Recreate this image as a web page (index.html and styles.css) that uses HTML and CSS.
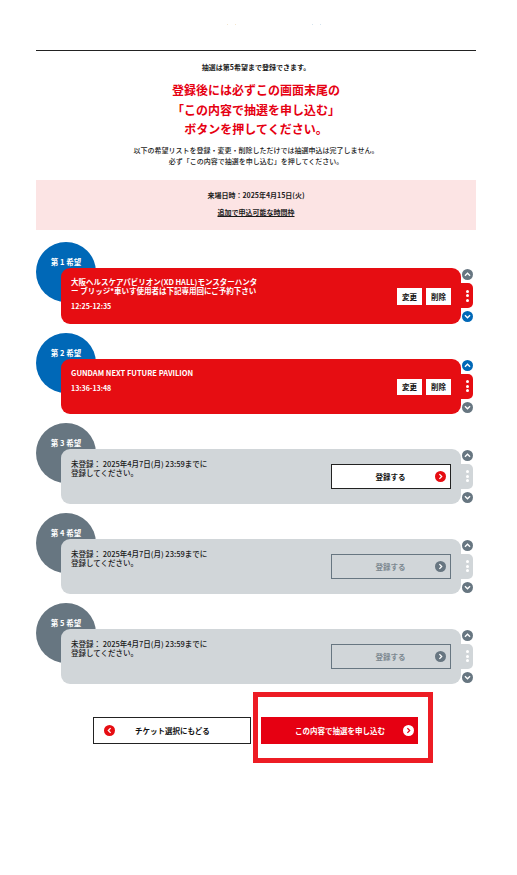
FILE: index.html
```html
<!DOCTYPE html>
<html lang="ja">
<head>
<meta charset="utf-8">
<title>抽選申込</title>
<link rel="stylesheet" href="styles.css">
</head>
<body>
<svg class="defs" width="0" height="0" aria-hidden="true">
  <symbol id="up" viewBox="0 0 12 12"><path d="M3.2 7.3 6 4.6l2.8 2.7" fill="none" stroke="#fff" stroke-width="1.5"/></symbol>
  <symbol id="down" viewBox="0 0 12 12"><path d="M3.2 4.7 6 7.4l2.8-2.7" fill="none" stroke="#fff" stroke-width="1.5"/></symbol>
  <symbol id="right" viewBox="0 0 12 12"><path d="M4.8 3.4 7.3 6 4.8 8.6" fill="none" stroke="currentColor" stroke-width="1.4"/></symbol>
  <symbol id="left" viewBox="0 0 12 12"><path d="M7.2 3.4 4.7 6l2.5 2.6" fill="none" stroke="currentColor" stroke-width="1.4"/></symbol>
</svg>
<main class="page">
  <header class="top"><i class="speck speck-warm"></i><i class="speck speck-warm"></i><i class="speck speck-cool speck-gap"></i><i class="speck speck-cool"></i></header>
  <p class="lead">抽選は第5希望まで登録できます。</p>
  <h1 class="alert">登録後には必ずこの画面末尾の<br>「この内容で抽選を申し込む」<br>ボタンを押してください。</h1>
  <p class="note">以下の希望リストを登録・変更・削除しただけでは抽選申込は完了しません。<br>必ず「この内容で抽選を申し込む」を押してください。</p>
  <section class="date">
    <p class="date-text">来場日時：2025年4月15日(火)</p>
    <a class="date-link" href="#">追加で申込可能な時間枠</a>
  </section>
  <ol class="list">
    <li class="item">
      <span class="badge badge-on">第 1 希望</span>
      <div class="card card-on">
        <div class="info">
          <p class="name">大阪ヘルスケアパビリオン(XD HALL)モンスターハンター ブリッジ*車いす使用者は下記専用回にご予約下さい</p>
          <p class="time">12:25-12:35</p>
        </div>
        <div class="actions"><button class="mini">変更</button><button class="mini">削除</button></div>
      </div>
      <div class="side">
        <span class="arrow arrow-off"><svg><use href="#up"/></svg></span>
        <span class="handle handle-on"><i></i><i></i><i></i></span>
        <span class="arrow arrow-on"><svg><use href="#down"/></svg></span>
      </div>
    </li>
    <li class="item">
      <span class="badge badge-on">第 2 希望</span>
      <div class="card card-on">
        <div class="info">
          <p class="name">GUNDAM NEXT FUTURE PAVILION</p>
          <p class="time">13:36-13:48</p>
        </div>
        <div class="actions"><button class="mini mini-short">変更</button><button class="mini mini-short">削除</button></div>
      </div>
      <div class="side">
        <span class="arrow arrow-on"><svg><use href="#up"/></svg></span>
        <span class="handle handle-on"><i></i><i></i><i></i></span>
        <span class="arrow arrow-off"><svg><use href="#down"/></svg></span>
      </div>
    </li>
    <li class="item">
      <span class="badge">第 3 希望</span>
      <div class="card">
        <p class="empty">未登録： 2025年4月7日(月) 23:59までに登録してください。</p>
        <button class="register"><span>登録する</span><span class="dot dot-red"><svg><use href="#right"/></svg></span></button>
      </div>
      <div class="side">
        <span class="arrow arrow-off"><svg><use href="#up"/></svg></span>
        <span class="handle"><i></i><i></i><i></i></span>
        <span class="arrow arrow-off"><svg><use href="#down"/></svg></span>
      </div>
    </li>
    <li class="item">
      <span class="badge">第 4 希望</span>
      <div class="card">
        <p class="empty">未登録： 2025年4月7日(月) 23:59までに登録してください。</p>
        <button class="register register-off"><span>登録する</span><span class="dot dot-grey"><svg><use href="#right"/></svg></span></button>
      </div>
      <div class="side">
        <span class="arrow arrow-off"><svg><use href="#up"/></svg></span>
        <span class="handle"><i></i><i></i><i></i></span>
        <span class="arrow arrow-off"><svg><use href="#down"/></svg></span>
      </div>
    </li>
    <li class="item">
      <span class="badge">第 5 希望</span>
      <div class="card">
        <p class="empty">未登録： 2025年4月7日(月) 23:59までに登録してください。</p>
        <button class="register register-off"><span>登録する</span><span class="dot dot-grey"><svg><use href="#right"/></svg></span></button>
      </div>
      <div class="side">
        <span class="arrow arrow-off"><svg><use href="#up"/></svg></span>
        <span class="handle"><i></i><i></i><i></i></span>
        <span class="arrow arrow-off"><svg><use href="#down"/></svg></span>
      </div>
    </li>
  </ol>
  <div class="footer">
    <button class="back"><span class="dot dot-red"><svg><use href="#left"/></svg></span><span class="back-label">チケット選択にもどる</span></button>
    <div class="frame">
      <button class="submit"><span class="submit-label">この内容で抽選を申し込む</span><span class="dot dot-white"><svg><use href="#right"/></svg></span></button>
    </div>
  </div>
</main>
</body>
</html>
```
FILE: styles.css
```css
* { box-sizing: border-box; }
html, body { margin: 0; padding: 0; background: #fff; }
body {
  font-family: "Noto Sans CJK JP", "Noto Sans", sans-serif;
  color: #1a1a1a;
  font-size: 7px;
  font-weight: 700;
}
p, h1, ol { margin: 0; padding: 0; }
.defs { position: absolute; }
.page { width: 440px; margin-left: 36px; height: 875px; }
.top {
  height: 51px;
  border-bottom: 1px solid #222;
  display: flex;
  gap: 7px;
  align-items: flex-start;
  padding: 24px 0 0 191px;
}
.speck { display: block; width: 1px; height: 1px; }
.speck-warm { background: #f3e6cf; }
.speck-cool { background: #d5e4ef; }
.speck-gap { margin-left: 69px; }

.lead { margin-top: 10px; line-height: 12px; text-align: center; font-size: 7px; }
.alert {
  margin-top: 7px;
  color: #e60012;
  font-size: 12px;
  font-weight: 700;
  line-height: 19.5px;
  text-align: center;
}
.note { margin-top: 6px; font-size: 7px; font-weight: 500; line-height: 11px; text-align: center; }

.date {
  margin-top: 13px;
  height: 50px;
  padding-top: 9px;
  background: #fce4e4;
  text-align: center;
}
.date-text { line-height: 12px; }
.date-link { display: inline-block; margin-top: 5px; line-height: 12px; color: #1a1a1a; text-decoration: underline; }

.list { list-style: none; margin-top: 12px; display: flex; flex-direction: column; gap: 9px; }
.item { position: relative; padding: 26px 15px 0 25px; }
.badge {
  position: absolute;
  left: 0;
  top: 0;
  width: 60px;
  height: 60px;
  border-radius: 50%;
  background: #677681;
  color: #fff;
  font-size: 7.5px;
  line-height: 12px;
  padding-top: 14px;
  text-align: center;
}
.badge-on { background: #0068b7; }

.card {
  position: relative;
  display: flex;
  justify-content: space-between;
  align-items: flex-start;
  width: 400px;
  height: 55px;
  padding: 10px 10px 15px;
  border-radius: 9px;
  background: #d1d6d9;
}
.card-on { background: #e60d12; color: #fff; padding-top: 9px; padding-bottom: 10px; }
.item:first-child .card { height: 56px; }
.info { width: 190px; flex: none; }
.name { font-size: 7.5px; line-height: 9px; }
.time { margin-top: 6px; line-height: 10px; }
.actions { display: flex; gap: 4px; align-self: flex-end; margin-bottom: 9px; }
.mini {
  width: 25px;
  height: 17px;
  border: 0;
  padding: 0;
  background: #fff;
  color: #111;
  font: inherit;
  font-size: 7.5px;
}
.mini-short { height: 16px; }
.empty { width: 140px; flex: none; font-weight: 500; font-size: 7.5px; line-height: 9px; }

.register {
  position: relative;
  align-self: flex-end;
  width: 120px;
  height: 25px;
  padding: 0 4px 0 0;
  border: 1px solid #222;
  background: #fff;
  color: #111;
  font: inherit;
  font-size: 7.5px;
  display: flex;
  align-items: center;
  justify-content: flex-end;
  gap: 29.5px;
}
.register-off { border-color: #677681; background: transparent; color: #7c8890; }

.dot { display: inline-flex; width: 11px; height: 11px; border-radius: 50%; flex: none; }
.dot svg { width: 11px; height: 11px; }
.dot-red { background: #e60d12; color: #fff; }
.dot-grey { background: #677681; color: #fff; }
.dot-white { background: #fff; color: #e60012; }

.side {
  position: absolute;
  left: 425px;
  top: 26px;
  bottom: 0;
  width: 12px;
  display: flex;
  flex-direction: column;
  align-items: center;
  justify-content: center;
  gap: 3px;
}
.arrow { display: block; width: 11px; height: 11px; border-radius: 50%; flex: none; }
.arrow svg { display: block; width: 11px; height: 11px; }
.arrow-on { background: #0068b7; }
.arrow-off { background: #677681; }
.handle {
  width: 12px;
  height: 25px;
  flex: none;
  border-radius: 0 5px 5px 0;
  background: #d1d6d9;
  display: flex;
  flex-direction: column;
  align-items: center;
  justify-content: center;
  gap: 1.5px;
}
.handle i { display: block; width: 3px; height: 3px; border-radius: 50%; background: #fff; }
.handle-on { background: #e60d12; }

.footer { display: flex; align-items: flex-start; margin-top: 8px; padding-left: 57px; }
.back {
  margin-top: 25px;
  width: 158px;
  height: 27px;
  padding: 0 0 0 10px;
  border: 1px solid #222;
  background: #fff;
  color: #111;
  font: inherit;
  font-size: 7.5px;
  display: flex;
  align-items: center;
}
.back-label { margin-left: 20px; }
.frame {
  width: 180px;
  height: 71px;
  margin-left: 2px;
  padding: 20px 0 0 3px;
  border: 5px solid #ed1c24;
}
.submit {
  width: 157px;
  height: 27px;
  padding: 0 4px 0 0;
  border: 0;
  background: #e60012;
  color: #fff;
  font: inherit;
  font-size: 7.5px;
  display: flex;
  align-items: center;
  justify-content: flex-end;
  gap: 18px;
}
```
